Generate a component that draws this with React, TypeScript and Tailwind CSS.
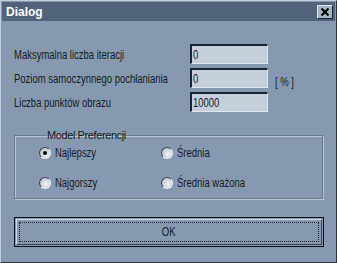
import React from "react";

const font = "font-['Liberation_Sans',Arial,sans-serif]";

// the dialog uses a narrow sans, squeeze Liberation Sans to match
function T({ children, center }: { children: React.ReactNode; center?: boolean }) {
  return (
    <span className={`inline-block whitespace-nowrap text-[12px] text-[#141a22] scale-x-[0.79] ${center ? "origin-center" : "origin-left"}`}>
      {children}
    </span>
  );
}

function Field({ label, value, suffix }: { label: string; value: string; suffix?: string }) {
  return (
    <div className="flex h-[20px] items-center">
      <div className="w-[176px]">
        <T>{label}</T>
      </div>
      <div className="flex h-[20px] w-[78px] items-center border-t-2 border-l-2 border-b border-r border-t-[#1c242e] border-l-[#1c242e] border-b-[#dfe6ee] border-r-[#dfe6ee] bg-[#c4cfdb] pl-[1px] text-[12px] text-[#141a22]">
        <T>{value}</T>
      </div>
      {suffix && (
        <div className="ml-[7px] pt-[6px]">
          <T>{suffix}</T>
        </div>
      )}
    </div>
  );
}

function Radio({ label, checked }: { label: string; checked?: boolean }) {
  return (
    <div className="flex items-center gap-[4px]">
      <div className="flex h-[12px] w-[12px] shrink-0 items-center justify-center rounded-full border border-t-[#3c4756] border-l-[#3c4756] border-b-[#eef2f6] border-r-[#eef2f6] bg-[radial-gradient(circle_at_60%_60%,#f4f6f9,#a7b3c1)]">
        {checked && <div className="h-[4px] w-[4px] rounded-full bg-black" />}
      </div>
      <T>{label}</T>
    </div>
  );
}

export default function App() {
  return (
    <div className={`${font} h-[263px] w-[337px] overflow-hidden border border-t-[#c3cedb] border-l-[#c3cedb] border-b-[#2a323c] border-r-[#2a323c] bg-[#8799b0]`}>
      <div className="mx-[1px] mt-[1px] flex h-[19px] items-center justify-between bg-[#50637a] pl-[4px] pr-[2px]">
        <span className="text-[12px] font-bold text-white">Dialog</span>
        <div className="flex h-[14px] w-[16px] items-center justify-center border border-t-[#e3e9ef] border-l-[#e3e9ef] border-b-[#1c242e] border-r-[#1c242e] bg-[#a5b3c3]">
          <svg width="8" height="8" viewBox="0 0 8 8">
            <path d="M0.5 0.5 L7.5 7.5 M7.5 0.5 L0.5 7.5" stroke="#000" strokeWidth="2" />
          </svg>
        </div>
      </div>
      <div className="flex flex-col pl-[13px] pr-[13px] pt-[23px]">
        <div className="flex flex-col gap-[4px]">
          <Field label="Maksymalna liczba iteracji" value="0" />
          <Field label="Poziom samoczynnego pochłaniania" value="0" suffix="[ % ]" />
          <Field label="Liczba punktów obrazu" value="10000" />
        </div>
        <fieldset className="mt-[17px] h-[70px] w-[309px] border border-[#68798f] px-[24px] shadow-[inset_1px_1px_0_#b8c5d3,1px_1px_0_#b8c5d3]">
          <legend className="ml-[7px] px-[1px] text-[11px] leading-[13px] tracking-[-0.4px] text-[#141a22]">Model Preferencji</legend>
          <div className="mt-[2px] grid grid-cols-[122px_1fr] gap-y-[12px]">
            <Radio label="Najlepszy" checked />
            <Radio label="Średnia" />
            <Radio label="Najgorszy" />
            <Radio label="Średnia ważona" />
          </div>
        </fieldset>
        <div className="mt-[18px] h-[30px] w-[310px] border border-[#0e1218] p-[1px]">
          <div className="flex h-full w-full items-center justify-center border border-t-[#d3dce6] border-l-[#d3dce6] border-b-[#3a4452] border-r-[#3a4452] p-[2px]">
            <div className="flex h-full w-full items-center justify-center border border-dotted border-[#1a2028]">
              <T center>OK</T>
            </div>
          </div>
        </div>
      </div>
    </div>
  );
}
